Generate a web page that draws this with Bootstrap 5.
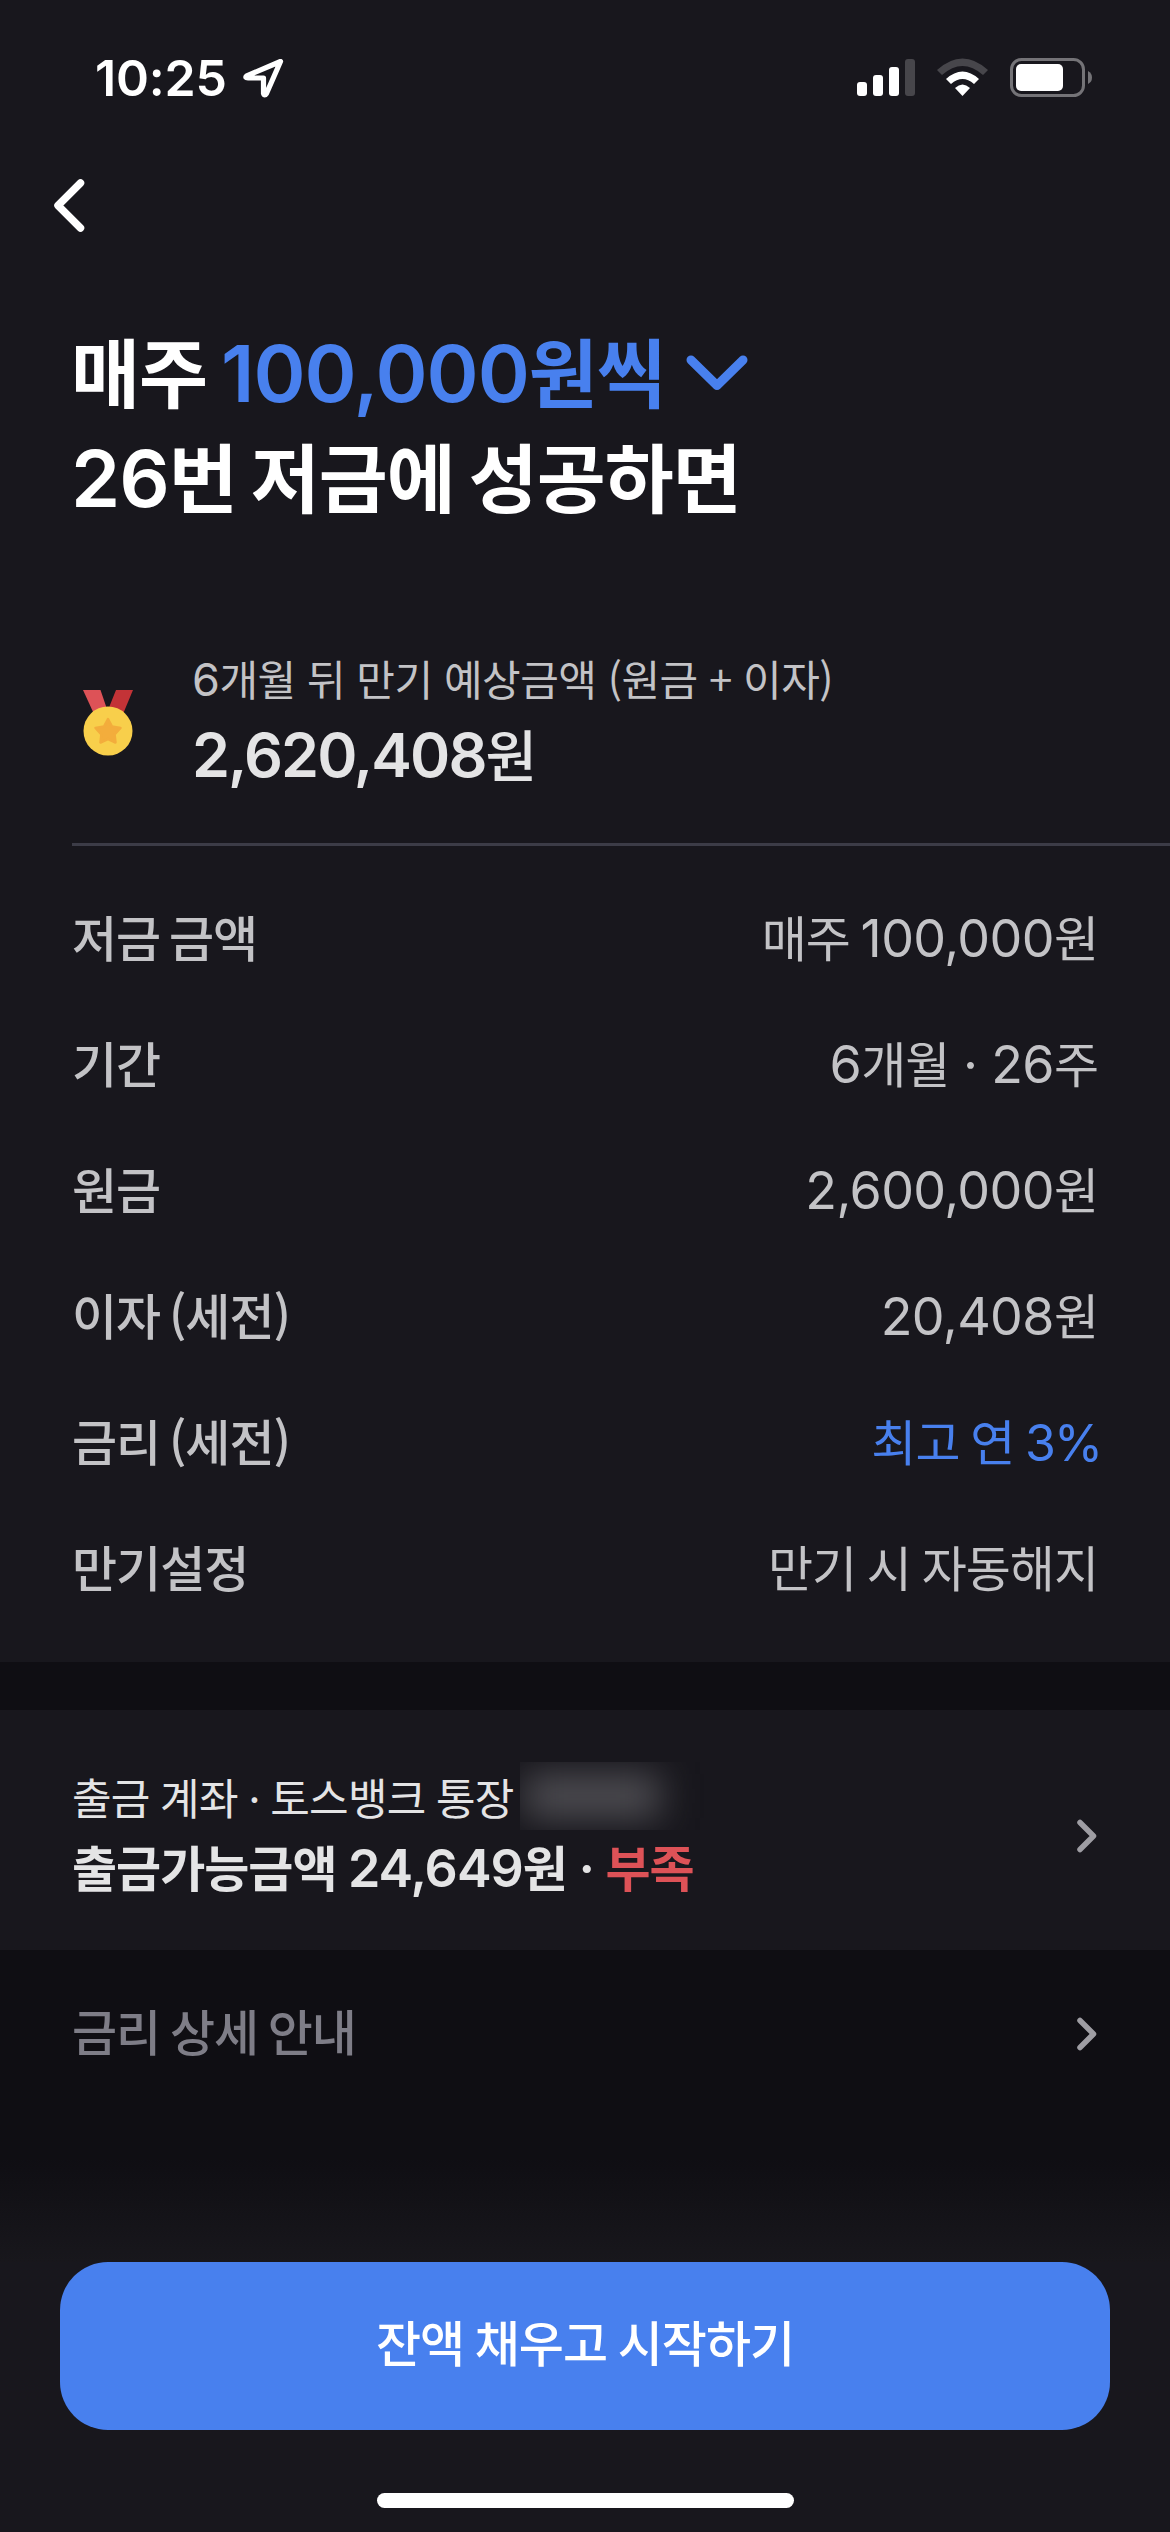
<!DOCTYPE html>
<html lang="ko" data-bs-theme="dark">
<head>
<meta charset="utf-8">
<meta name="viewport" content="width=device-width, initial-scale=1">
<title>저금 시작하기</title>
<link href="https://cdn.jsdelivr.net/npm/bootstrap@5.3.0/dist/css/bootstrap.min.css" rel="stylesheet">
<style>
  body { width:1170px; height:2532px; overflow:hidden; background:#18171d; font-family:"Noto Sans CJK KR",sans-serif; color:#c3c3c6; }
  svg { display:block; flex:none; }
  .num { font-family:Inter,sans-serif; line-height:0; }
  .blue { color:#4880ee; }
  .statusbar { height:150px; padding:5px 78px 0 95px; }
  .clock { font:600 50px/60px Inter,sans-serif; color:#fff; letter-spacing:-.2px; margin-top:1px; }
  .navtop { height:162px; padding:29px 0 0 54px; }
  .headline { height:325px; padding:5px 0 0 71px; font-size:75px; line-height:105px; font-weight:700; color:#fff; letter-spacing:-1px; word-spacing:-6px; }
  .headline .num { font-size:79px; font-weight:600; }
  .headline svg { margin:6px 0 0 21px; }
  .expected { height:206px; padding:11px 0 0 83px; gap:59px; }
  .expected svg { margin-top:42px; }
  .expected .cap { font-size:42px; line-height:60px; letter-spacing:-.5px; }
  .expected .cap .num { font-size:45px; }
  .expected .sum { font-size:56px; line-height:89px; font-weight:500; color:#e4e4e5; letter-spacing:-1.9px; }
  .expected .sum .num { font-size:61px; font-weight:600; }
  .hairline { height:3px; margin-left:72px; background:#3c3c47; }
  .details { height:816px; padding:27px 72px 0; font-size:49px; letter-spacing:-1px; }
  .details .item { height:126px; line-height:126px; }
  .details dt { font-weight:500; word-spacing:-4px; }
  .details dd { word-spacing:-2px; white-space:nowrap; }
  .details dd .num { font-size:52px; letter-spacing:-.6px; }
  .details dd .dot { margin:0 3px; }
  .details dd .pct { font-size:50px; letter-spacing:-2px; margin-right:-3px; }
  .band { height:48px; background:#0f0e13; }
  .account { height:240px; padding:4px 72px 0; color:#e4e4e5; }
  .account svg { margin-top:8px; }
  .account .line-a { font-size:43px; line-height:68px; letter-spacing:-.7px; word-spacing:-1px; }
  .account .line-b { font-size:49px; line-height:72px; font-weight:700; letter-spacing:-1px; word-spacing:-1.2px; }
  .account .line-b .num { font-size:52px; font-weight:600; }
  .smudge { width:196px; height:68px; overflow:hidden; margin-left:6px; }
  .smudge i { display:block; width:136px; height:44px; margin:12px 0 0 4px; background:#4f4e53; filter:blur(18px); }
  .lack { color:#dd5257; }
  .ratelink { height:312px; background:linear-gradient(#0f0e13 0 208px,#18171c 312px); padding:0 72px; color:#7e7d87; font-size:49px; font-weight:500; letter-spacing:-1px; word-spacing:-3px; }
  .ratelink > div { height:168px; }
  .ratelink span { padding-bottom:9px; }
  .cta { width:1050px; height:168px; padding:0 0 10px; border-radius:48px; background:#4880ee; color:#fff; font-size:49px; font-weight:500; letter-spacing:-1px; word-spacing:-2px; }
  .homebar { width:417px; height:15px; border-radius:8px; background:#fff; margin-top:63px; }
</style>
<script src="https://cdn.jsdelivr.net/npm/bootstrap@5.3.0/dist/js/bootstrap.bundle.min.js"></script>
</head>
<body>
<header>
  <div class="statusbar d-flex align-items-center justify-content-between">
    <div class="d-flex align-items-center">
      <span class="clock">10:25</span>
      <svg width="42" height="42" viewBox="0 0 42 42" class="ms-3" fill="none" stroke="#fff" stroke-width="5.2" stroke-linejoin="round"><path d="M37.5 4.5 3.7 18.8Q1.5 20.9 5 21H20.5V36.500Q21.500 39.500 23.500 36.500L37.500 4.500Z"/></svg>
    </div>
    <svg width="235" height="40" viewBox="0 0 235 40">
      <g fill="#fff"><rect y="24" width="10" height="14" rx="3"/><rect x="16" y="17" width="10" height="21" rx="3"/><rect x="32" y="9" width="10" height="29" rx="3"/></g>
      <rect x="48" y="1" width="10" height="37" rx="3" fill="#47464b"/>
      <path d="M80 12Q105.500-11 131 12L126 17Q105.500-1 85 17Z" fill="#47464b"/>
      <path d="M89 21Q105.500 6 122 21L117 26Q105.500 16 94 26Z" fill="#fff"/>
      <path d="M98 30Q105.500 23 113 30L105.500 38Z" fill="#fff"/>
      <rect x="154.500" y="1.500" width="72" height="36" rx="10" fill="none" stroke="#747377" stroke-width="3"/>
      <rect x="159" y="6" width="47" height="27" rx="5" fill="#fff"/>
      <path d="M231 13Q235 15 235 19.500T231 26Z" fill="#747377"/>
    </svg>
  </div>
  <div class="navtop">
    <svg width="31" height="54" viewBox="0 0 31 54" fill="none" stroke="#fff" stroke-width="7.500" stroke-linecap="round" stroke-linejoin="round"><path d="M26.500 4 4 26.500 26.500 49"/></svg>
  </div>
</header>
<main>
  <div class="headline">
    <div class="d-flex align-items-center"><span>매주 <span class="blue"><span class="num">100,000</span>원씩</span></span>
      <svg width="62" height="36" viewBox="0 0 62 36" fill="none" stroke="#4880ee" stroke-width="9" stroke-linecap="round" stroke-linejoin="round"><path d="M5 5 31 30.500 57 5"/></svg></div>
    <div><span class="num">26</span>번 저금에 성공하면</div>
  </div>
  <div class="expected d-flex">
    <svg width="50" height="66" viewBox="0 0 50 66">
      <path d="M0 0H17.500L25 22 11 24Z" fill="#dd5257"/><path d="M33 0H50L40 24 25 20Z" fill="#c33337"/>
      <circle cx="25" cy="41" r="24.500" fill="#f8cf4b"/>
      <path d="M25 29 29 36.500 37.500 38 31.600 44.300 32.500 52.500 25 49 17.500 52.500 18.400 44.300 12.500 38 21 36.500Z" fill="#f3ad3c" stroke="#f3ad3c" stroke-width="2.500" stroke-linejoin="round"/>
    </svg>
    <div>
      <div class="cap"><span class="num">6</span>개월 뒤 만기 예상금액 (원금 + 이자)</div>
      <div class="sum"><span class="num">2,620,408</span>원</div>
    </div>
  </div>
  <div class="hairline"></div>
  <dl class="details mb-0">
    <div class="item d-flex justify-content-between"><dt>저금 금액</dt><dd>매주 <span class="num">100,000</span>원</dd></div>
    <div class="item d-flex justify-content-between"><dt>기간</dt><dd><span class="num">6</span>개월 <span class="num dot">·</span> <span class="num">26</span>주</dd></div>
    <div class="item d-flex justify-content-between"><dt>원금</dt><dd><span class="num">2,600,000</span>원</dd></div>
    <div class="item d-flex justify-content-between"><dt>이자 (세전)</dt><dd><span class="num">20,408</span>원</dd></div>
    <div class="item d-flex justify-content-between"><dt>금리 (세전)</dt><dd class="blue">최고 연 <span class="num pct">3%</span></dd></div>
    <div class="item d-flex justify-content-between"><dt>만기설정</dt><dd>만기 시 자동해지</dd></div>
  </dl>
  <div class="band"></div>
  <section class="account d-flex align-items-center justify-content-between">
    <div>
      <div class="line-a d-flex"><span>출금 계좌 <span class="num">·</span> 토스뱅크 통장</span><span class="smudge"><i></i></span></div>
      <div class="line-b">출금가능금액 <span class="num">24,649</span>원 <span class="num">·</span> <span class="lack">부족</span></div>
    </div>
    <svg width="24" height="36" viewBox="0 0 24 36" fill="none" stroke="#9e9da3" stroke-width="5.500" stroke-linecap="round" stroke-linejoin="round"><path d="M6 4.500 19.500 18 6 31.500"/></svg>
  </section>
  <section class="ratelink">
    <div class="d-flex align-items-center justify-content-between"><span>금리 상세 안내</span>
      <svg width="24" height="36" viewBox="0 0 24 36" fill="none" stroke="#9e9da3" stroke-width="5.500" stroke-linecap="round" stroke-linejoin="round"><path d="M6 4.500 19.500 18 6 31.500"/></svg></div>
  </section>
</main>
<footer class="d-flex flex-column align-items-center">
  <button type="button" class="btn cta">잔액 채우고 시작하기</button>
  <div class="homebar"></div>
</footer>
</body>
</html>
